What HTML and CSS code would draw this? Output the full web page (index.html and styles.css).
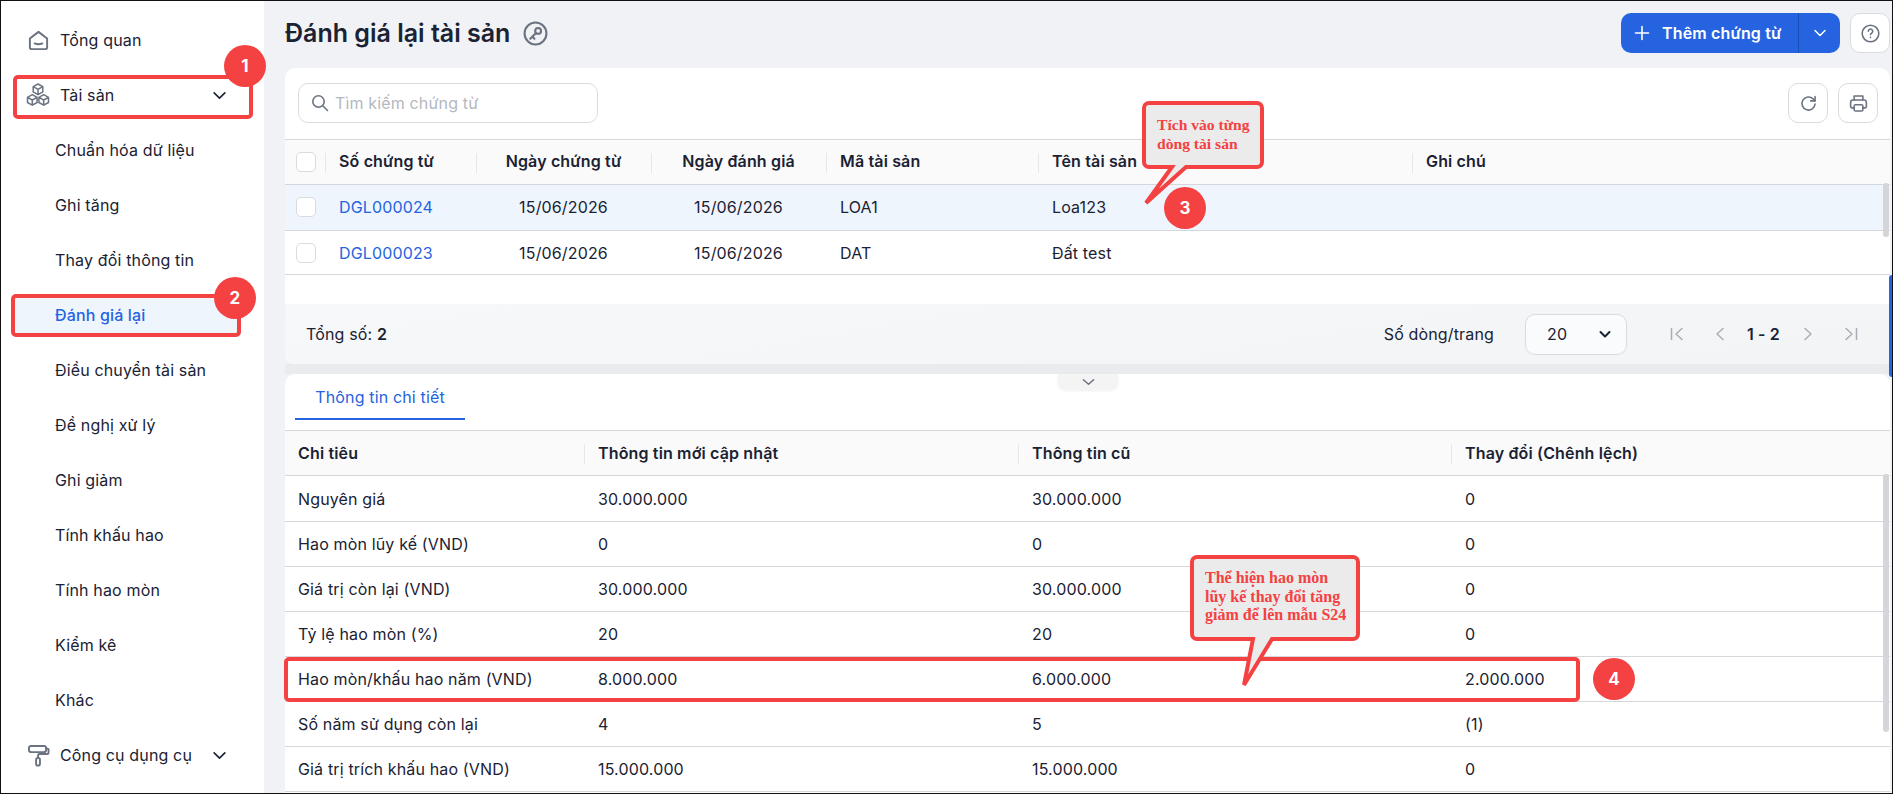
FILE: index.html
```html
<!DOCTYPE html>
<html lang="vi">
  <head>
    <meta charset="UTF-8" />
    <meta name="viewport" content="width=device-width, initial-scale=1.0" />
    <title>Đánh giá lại tài sản</title>
    <link rel="stylesheet" href="styles.css">
  </head>
  <body>
    <div class="app">
      <!-- Menu trái -->
      <nav class="sidebar">
        <a class="nav-item">
          <svg class="nav-icon" viewBox="0 0 24 24"><path d="M3 10 12 3l9 7v9a2 2 0 0 1-2 2H5a2 2 0 0 1-2-2z"/><path d="M8 15c2.500 1.200 5.500 1.200 8 0"/></svg>
          Tổng quan
        </a>
        <a class="nav-item">
          <svg class="nav-icon icon-cubes" viewBox="0 0 24 24">
            <path d="M12 1l4.800 2.700v5.200L12 11.600 7.200 8.900V3.700zM7.200 3.700 12 6.400l4.800-2.700M12 6.400v5.200"/>
            <path d="M6.300 11.600l4.800 2.700v5.200L6.300 22.200 1.500 19.500v-5.200zM1.500 14.300l4.800 2.700 4.800-2.700M6.300 17v5.200"/>
            <path d="M17.700 11.600l4.800 2.700v5.200l-4.800 2.700-4.800-2.700v-5.200zM12.900 14.300l4.800 2.700 4.800-2.700M17.700 17v5.200"/>
          </svg>
          Tài sản
          <svg class="nav-arrow" viewBox="0 0 14 14"><path d="M2 4.500 7 9.500l5-5"/></svg>
        </a>
        <a class="nav-sub">Chuẩn hóa dữ liệu</a>
        <a class="nav-sub">Ghi tăng</a>
        <a class="nav-sub">Thay đổi thông tin</a>
        <a class="nav-sub active">Đánh giá lại</a>
        <a class="nav-sub">Điều chuyển tài sản</a>
        <a class="nav-sub">Đề nghị xử lý</a>
        <a class="nav-sub">Ghi giảm</a>
        <a class="nav-sub">Tính khấu hao</a>
        <a class="nav-sub">Tính hao mòn</a>
        <a class="nav-sub">Kiểm kê</a>
        <a class="nav-sub">Khác</a>
        <a class="nav-item">
          <svg class="nav-icon" viewBox="0 0 24 24"><rect x="2" y="2" width="18" height="6.500" rx="2.500"/><path d="M20 5h1.500a1 1 0 0 1 1 1v3a1.500 1.500 0 0 1-1.500 1.500h-8a1.500 1.500 0 0 0-1.500 1.500v2"/><rect x="9.500" y="14.500" width="4" height="8" rx="2"/></svg>
          Công cụ dụng cụ
          <svg class="nav-arrow" viewBox="0 0 14 14"><path d="M2 4.500 7 9.500l5-5"/></svg>
        </a>
      </nav>

      <main class="main">
        <header class="page-head">
          <h1 class="page-title">Đánh giá lại tài sản</h1>
          <svg class="title-icon" viewBox="0 0 24 24"><circle cx="12" cy="12" r="10.500"/><circle cx="14.500" cy="9.500" r="2.800"/><path d="M12.500 11.500 7 17M9 15l2 2"/></svg>
          <div class="add-btn">
            <span class="add-main">
              <svg class="add-plus" viewBox="0 0 16 16"><path d="M8 1.500v13M1.500 8h13"/></svg>
              Thêm chứng từ
            </span>
            <span class="add-more"><svg viewBox="0 0 14 14"><path d="M2 4.500 7 9.500l5-5"/></svg></span>
          </div>
          <button class="icon-btn help-btn">
            <svg viewBox="0 0 24 24"><circle cx="12" cy="12" r="9.500"/><path d="M9.500 9.500a2.500 2.500 0 1 1 3.800 2.100c-.9.600-1.300 1-1.300 1.900"/><path d="M12 16.300v.4"/></svg>
          </button>
        </header>

        <section class="card card-list">
          <div class="toolbar">
            <label class="search">
              <svg viewBox="0 0 18 18"><circle cx="7.500" cy="7.500" r="5.700"/><path d="m12 12 4.500 4.500"/></svg>
              <span>Tìm kiếm chứng từ</span>
            </label>
            <button class="icon-btn tool-refresh">
              <svg viewBox="0 0 24 24"><path d="M19.500 12.500a7.500 7.500 0 1 1-2.300-5.900L19.500 9"/><path d="M19.500 4v5h-5"/></svg>
            </button>
            <button class="icon-btn">
              <svg viewBox="0 0 24 24"><path d="M7 8V3.500h10V8"/><path d="M7 17H4.500a1.500 1.500 0 0 1-1.500-1.500v-5A2.500 2.500 0 0 1 5.500 8h13a2.500 2.500 0 0 1 2.500 2.500v5a1.500 1.500 0 0 1-1.500 1.500H17"/><rect x="7" y="13.500" width="10" height="7" rx="1.500"/></svg>
            </button>
          </div>

          <table class="grid grid-docs">
            <colgroup>
              <col class="c-check"><col class="c-no"><col class="c-date"><col class="c-date2"><col class="c-code"><col class="c-name"><col>
            </colgroup>
            <thead>
              <tr>
                <th class="check-cell"><span class="check"></span></th>
                <th>Số chứng từ</th>
                <th class="center">Ngày chứng từ</th>
                <th class="center">Ngày đánh giá</th>
                <th>Mã tài sản</th>
                <th>Tên tài sản</th>
                <th>Ghi chú</th>
              </tr>
            </thead>
            <tbody>
              <tr class="selected">
                <td class="check-cell"><span class="check"></span></td>
                <td class="link">DGL000024</td>
                <td class="center">15/06/2026</td>
                <td class="center">15/06/2026</td>
                <td>LOA1</td>
                <td>Loa123</td>
                <td></td>
              </tr>
              <tr class="short">
                <td class="check-cell"><span class="check"></span></td>
                <td class="link">DGL000023</td>
                <td class="center">15/06/2026</td>
                <td class="center">15/06/2026</td>
                <td>DAT</td>
                <td>Đất test</td>
                <td></td>
              </tr>
            </tbody>
          </table>

          <footer class="list-foot">
            <span>Tổng số: <b>2</b></span>
            <span class="page-size-label">Số dòng/trang</span>
            <span class="page-size">
              20
              <svg viewBox="0 0 14 14"><path d="M2.500 5 7 9.500 11.500 5"/></svg>
            </span>
            <div class="pager">
              <svg viewBox="0 0 16 16"><path d="M2.500 2.500v11M13 2.500 7 8l6 5.500"/></svg>
              <svg viewBox="0 0 16 16"><path d="M11 2.500 5 8l6 5.500"/></svg>
              <b>1 - 2</b>
              <svg viewBox="0 0 16 16"><path d="M5 2.500 11 8l-6 5.500"/></svg>
              <svg viewBox="0 0 16 16"><path d="M13.500 2.500v11M3 2.500 9 8l-6 5.500"/></svg>
            </div>
          </footer>
        </section>

        <div class="card-gap"></div>

        <section class="card card-detail">
          <div class="tabs"><span class="tab">Thông tin chi tiết</span></div>
          <table class="grid grid-detail">
            <colgroup>
              <col class="d-name"><col class="d-new"><col class="d-old"><col>
            </colgroup>
            <thead>
              <tr>
                <th>Chi tiêu</th>
                <th>Thông tin mới cập nhật</th>
                <th>Thông tin cũ</th>
                <th>Thay đổi (Chênh lệch)</th>
              </tr>
            </thead>
            <tbody>
              <tr class="first"><td>Nguyên giá</td><td>30.000.000</td><td>30.000.000</td><td>0</td></tr>
              <tr><td>Hao mòn lũy kế (VND)</td><td>0</td><td>0</td><td>0</td></tr>
              <tr><td>Giá trị còn lại (VND)</td><td>30.000.000</td><td>30.000.000</td><td>0</td></tr>
              <tr><td>Tỷ lệ hao mòn (%)</td><td>20</td><td>20</td><td>0</td></tr>
              <tr><td>Hao mòn/khấu hao năm (VND)</td><td>8.000.000</td><td>6.000.000</td><td>2.000.000</td></tr>
              <tr><td>Số năm sử dụng còn lại</td><td>4</td><td>5</td><td>(1)</td></tr>
              <tr><td>Giá trị trích khấu hao (VND)</td><td>15.000.000</td><td>15.000.000</td><td>0</td></tr>
            </tbody>
          </table>
        </section>
      </main>

      <!-- Thanh cuộn và nút thu gọn nằm đè lên bảng -->
      <span class="scroll-thumb thumb-docs"></span>
      <span class="scroll-thumb thumb-detail"></span>
      <span class="edge-tab"></span>
      <span class="collapse-handle"><svg viewBox="0 0 14 8"><path d="M1.500 1.500 7 6.500l5.500-5"/></svg></span>

      <!-- Chú thích đỏ trên ảnh chụp -->
      <span class="mark mark-menu"></span>
      <span class="mark mark-active"></span>
      <span class="mark mark-row"></span>
      <span class="step step-1">1</span>
      <span class="step step-2">2</span>
      <span class="step step-3">3</span>
      <span class="step step-4">4</span>

      <div class="callout callout-tick">
        <svg class="callout-shape" viewBox="0 0 126 112"><path d="M9 4H117a5 5 0 0 1 5 5V63a5 5 0 0 1-5 5H46L6 104 32 68H9a5 5 0 0 1-5-5V9a5 5 0 0 1 5-5z"/></svg>
        <p>Tích vào từng<br>dòng tài sản</p>
      </div>
      <div class="callout callout-wear">
        <svg class="callout-shape" viewBox="0 0 174 140"><path d="M9 4H165a5 5 0 0 1 5 5V81a5 5 0 0 1-5 5H84L56 132 65 86H9a5 5 0 0 1-5-5V9a5 5 0 0 1 5-5z"/></svg>
        <p>Thể hiện hao mòn<br>lũy kế thay đổi tăng<br>giảm để lên mẫu S24</p>
      </div>
    </div>
  </body>
</html>
```

FILE: styles.css
```css
* {
  box-sizing: border-box;
}

body {
  margin: 0;
  font-family: Inter, "Noto Sans", sans-serif;
  font-size: 16px;
  letter-spacing: 0.15px;
  color: #1a2233;
  background-color: #fff;
}

svg {
  fill: none;
  stroke: currentColor;
  stroke-linecap: round;
  stroke-linejoin: round;
}

.app {
  position: relative;
  display: flex;
  width: 1893px;
  height: 794px;
  border: 1px solid #111;
  overflow: hidden;
  background-color: #f0f2f5;
}

/* menu */
.sidebar {
  flex: none;
  width: 263px;
  padding-top: 11px;
  background-color: #fff;
}

.nav-item,
.nav-sub {
  display: flex;
  align-items: center;
  height: 55px;
}

.nav-item {
  position: relative;
  padding-left: 59px;
}

.nav-sub {
  padding-left: 54px;
}

.nav-sub.active {
  color: #2563e0;
  font-weight: 500;
  background: linear-gradient(#fff 8px, #eef5fd 8px, #eef5fd 47px, #fff 47px);
  margin: 0 24px 0 12px;
  padding-left: 42px;
}

.nav-icon {
  position: absolute;
  left: 26px;
  top: 17px;
  width: 23px;
  height: 23px;
  color: #6b7280;
  stroke-width: 2;
}

.icon-cubes {
  left: 25px;
  top: 16px;
  width: 24px;
  height: 24px;
  stroke-width: 1.500;
}

.nav-arrow {
  position: absolute;
  left: 211px;
  top: 21px;
  width: 15px;
  height: 15px;
  stroke-width: 1.500;
}

/* đầu trang */
.main {
  flex: 1;
  min-width: 0;
  display: flex;
  flex-direction: column;
  padding: 0 2px 0 21px;
}

.page-head {
  flex: none;
  display: flex;
  align-items: center;
  height: 67px;
  padding-bottom: 3px;
}

.page-title {
  margin: 0;
  font-size: 25px;
  font-weight: 600;
  line-height: 32px;
  letter-spacing: 0;
}

.title-icon {
  width: 25px;
  height: 25px;
  margin-left: 13px;
  color: #6b7280;
  stroke-width: 2;
}

.add-btn {
  display: flex;
  align-items: center;
  height: 40px;
  margin-left: auto;
  border-radius: 10px;
  color: #fff;
  font-weight: 600;
  background-color: #2563e0;
}

.add-main {
  display: flex;
  align-items: center;
  gap: 12px;
  width: 178px;
  height: 40px;
  padding-left: 13px;
  border-right: 1px solid #1c4fb5;
}

.add-plus {
  width: 16px;
  height: 16px;
  stroke-width: 1.600;
}

.add-more {
  display: flex;
  justify-content: center;
  width: 41px;
}

.add-more svg {
  width: 14px;
  height: 14px;
  stroke-width: 1.500;
}

.icon-btn {
  display: flex;
  align-items: center;
  justify-content: center;
  flex: none;
  width: 40px;
  height: 40px;
  padding: 0;
  border: 1px solid #d9dbe0;
  border-radius: 10px;
  color: #6b7280;
  background-color: #fff;
}

.icon-btn svg {
  width: 21px;
  height: 21px;
  stroke-width: 1.800;
}

.help-btn {
  margin-left: 10px;
}

/* card */
.card {
  background-color: #fff;
  border-radius: 10px 10px 0 0;
}

.card-list {
  flex: none;
  display: flex;
  flex-direction: column;
  height: 296px;
  border-radius: 10px;
  overflow: hidden;
}

.card-gap {
  flex: none;
  height: 10px;
  margin-left: -21px;
  margin-right: -2px;
  background: linear-gradient(to right, #f0f2f5 21px, #e9ebee 21px);
}

.card-detail {
  flex: 1;
  min-height: 0;
  overflow: hidden;
}

.toolbar {
  flex: none;
  display: flex;
  align-items: flex-start;
  gap: 10px;
  height: 71px;
  padding: 15px 12px 0 13px;
}

.search {
  display: flex;
  align-items: center;
  gap: 6px;
  width: 300px;
  height: 40px;
  margin-right: auto;
  padding-left: 12px;
  border: 1px solid #d9dbe0;
  border-radius: 10px;
  color: #b4b8bf;
}

.search svg {
  width: 18px;
  height: 18px;
  color: #6b7280;
  stroke-width: 1.600;
}

/* bảng */
.grid {
  width: 100%;
  table-layout: fixed;
  border-collapse: separate;
  border-spacing: 0;
}

.grid th,
.grid td {
  padding: 0 14px;
  border-bottom: 1px solid #d5d7db;
  text-align: left;
  white-space: nowrap;
}

.grid th {
  position: relative;
  height: 46px;
  font-weight: 600;
  background-color: #fafafa;
  border-top: 1px solid #d5d7db;
}

.grid th + th::before {
  content: "";
  position: absolute;
  left: 0;
  top: 13px;
  width: 1px;
  height: 20px;
  background-color: #e6e7ea;
}

.grid td {
  height: 46px;
}

.grid .center {
  text-align: center;
}

.grid .check-cell {
  padding: 0 0 0 11px;
}

.grid-docs th,
.grid-docs .selected td {
  padding-bottom: 2px;
}

.check {
  display: block;
  width: 20px;
  height: 20px;
  border: 1px solid #d9dbe0;
  border-radius: 5px;
  background-color: #fff;
}

.selected td {
  background-color: #eef5fd;
}

.grid .short td {
  height: 44px;
}

.grid .link {
  color: #2563e0;
}

.c-check { width: 40px; }
.c-no { width: 151px; }
.c-date,
.c-date2 { width: 175px; }
.c-code { width: 212px; }
.c-name { width: 374px; }

.d-name { width: 299px; }
.d-new { width: 434px; }
.d-old { width: 433px; }

.grid-detail th:first-child,
.grid-detail td:first-child {
  padding-left: 13px;
}

.grid-detail td {
  height: 45px;
}

.grid-detail .first td {
  height: 46px;
}

.grid-detail th {
  height: 46px;
}

.list-foot {
  flex: none;
  display: flex;
  align-items: center;
  height: 60px;
  margin-top: auto;
  padding: 0 31px 0 21px;
  background: linear-gradient(170deg, #f7f8fa, #f2f4f6);
}

.list-foot b {
  font-weight: 600;
}

.page-size-label {
  margin-left: auto;
}

.page-size {
  display: flex;
  align-items: center;
  justify-content: space-between;
  width: 102px;
  height: 41px;
  margin-left: 31px;
  padding: 0 14px 0 21px;
  border: 1px solid #d9dbe0;
  border-radius: 10px;
  background-color: #fafbfc;
}

.page-size svg {
  width: 14px;
  height: 14px;
  stroke-width: 2;
}

.pager {
  display: flex;
  align-items: center;
  gap: 27px;
  margin-left: 42px;
  color: #a9adb5;
}

.pager svg {
  width: 16px;
  height: 16px;
  stroke-width: 1.500;
}

.pager b {
  width: 34px;
  margin: 0 -8px;
  color: #1a2233;
  white-space: nowrap;
}

.tabs {
  height: 56px;
  padding-left: 10px;
}

.tab {
  display: block;
  width: 170px;
  height: 46px;
  padding-top: 13px;
  border-bottom: 2px solid #2563e0;
  color: #2563e0;
  text-align: center;
}

/* phần tử đè lên nội dung */
.scroll-thumb {
  position: absolute;
  left: 1882px;
  width: 6px;
  border-radius: 3px;
  background-color: #d4d6da;
}

.thumb-docs {
  top: 182px;
  height: 54px;
}

.thumb-detail {
  top: 473px;
  height: 258px;
}

.edge-tab {
  position: absolute;
  left: 1888px;
  top: 274px;
  width: 3px;
  height: 102px;
  border-radius: 3px 0 0 3px;
  background-color: #2563e0;
}

.collapse-handle {
  position: absolute;
  left: 1057px;
  top: 373px;
  display: flex;
  align-items: center;
  justify-content: center;
  width: 60px;
  height: 16px;
  border-radius: 0 0 8px 8px;
  color: #6b7280;
  background-color: #f4f4f4;
  box-shadow: 0 1px 3px rgba(0, 0, 0, 0.06);
}

.collapse-handle svg {
  width: 13px;
  height: 8px;
  stroke-width: 1.600;
}

.mark {
  position: absolute;
  border: 4px solid #f44141;
  border-radius: 5px;
}

.mark-menu {
  left: 12px;
  top: 74px;
  width: 240px;
  height: 44px;
}

.mark-active {
  left: 10px;
  top: 293px;
  width: 230px;
  height: 43px;
}

.mark-row {
  left: 283px;
  top: 656px;
  width: 1296px;
  height: 45px;
}

.step {
  position: absolute;
  display: flex;
  align-items: center;
  justify-content: center;
  width: 42px;
  height: 42px;
  border-radius: 50%;
  color: #fff;
  font-size: 17px;
  font-weight: 700;
  background-color: #f44141;
}

.step-1 { left: 223px; top: 44px; }
.step-2 { left: 213px; top: 276px; }
.step-3 { left: 1163px; top: 186px; }
.step-4 { left: 1592px; top: 657px; }

.callout {
  position: absolute;
  color: #f44141;
  font-family: "Liberation Serif", serif;
  font-weight: 700;
  letter-spacing: 0;
}

.callout-shape {
  position: absolute;
  left: 0;
  top: 0;
  fill: #ebebeb;
  stroke: #f44141;
  stroke-width: 4;
  stroke-linecap: butt;
  stroke-linejoin: miter;
}

.callout p {
  position: relative;
  margin: 0;
  white-space: nowrap;
}

.callout-tick {
  left: 1139px;
  top: 98px;
  font-size: 15.600px;
}

.callout-tick .callout-shape {
  width: 126px;
  height: 112px;
}

.callout-tick p {
  padding: 16px 0 0 17px;
  line-height: 19px;
}

.callout-wear {
  left: 1187px;
  top: 552px;
  font-size: 16px;
}

.callout-wear .callout-shape {
  width: 174px;
  height: 140px;
}

.callout-wear p {
  padding: 16px 0 0 17px;
  line-height: 18.500px;
}
```
